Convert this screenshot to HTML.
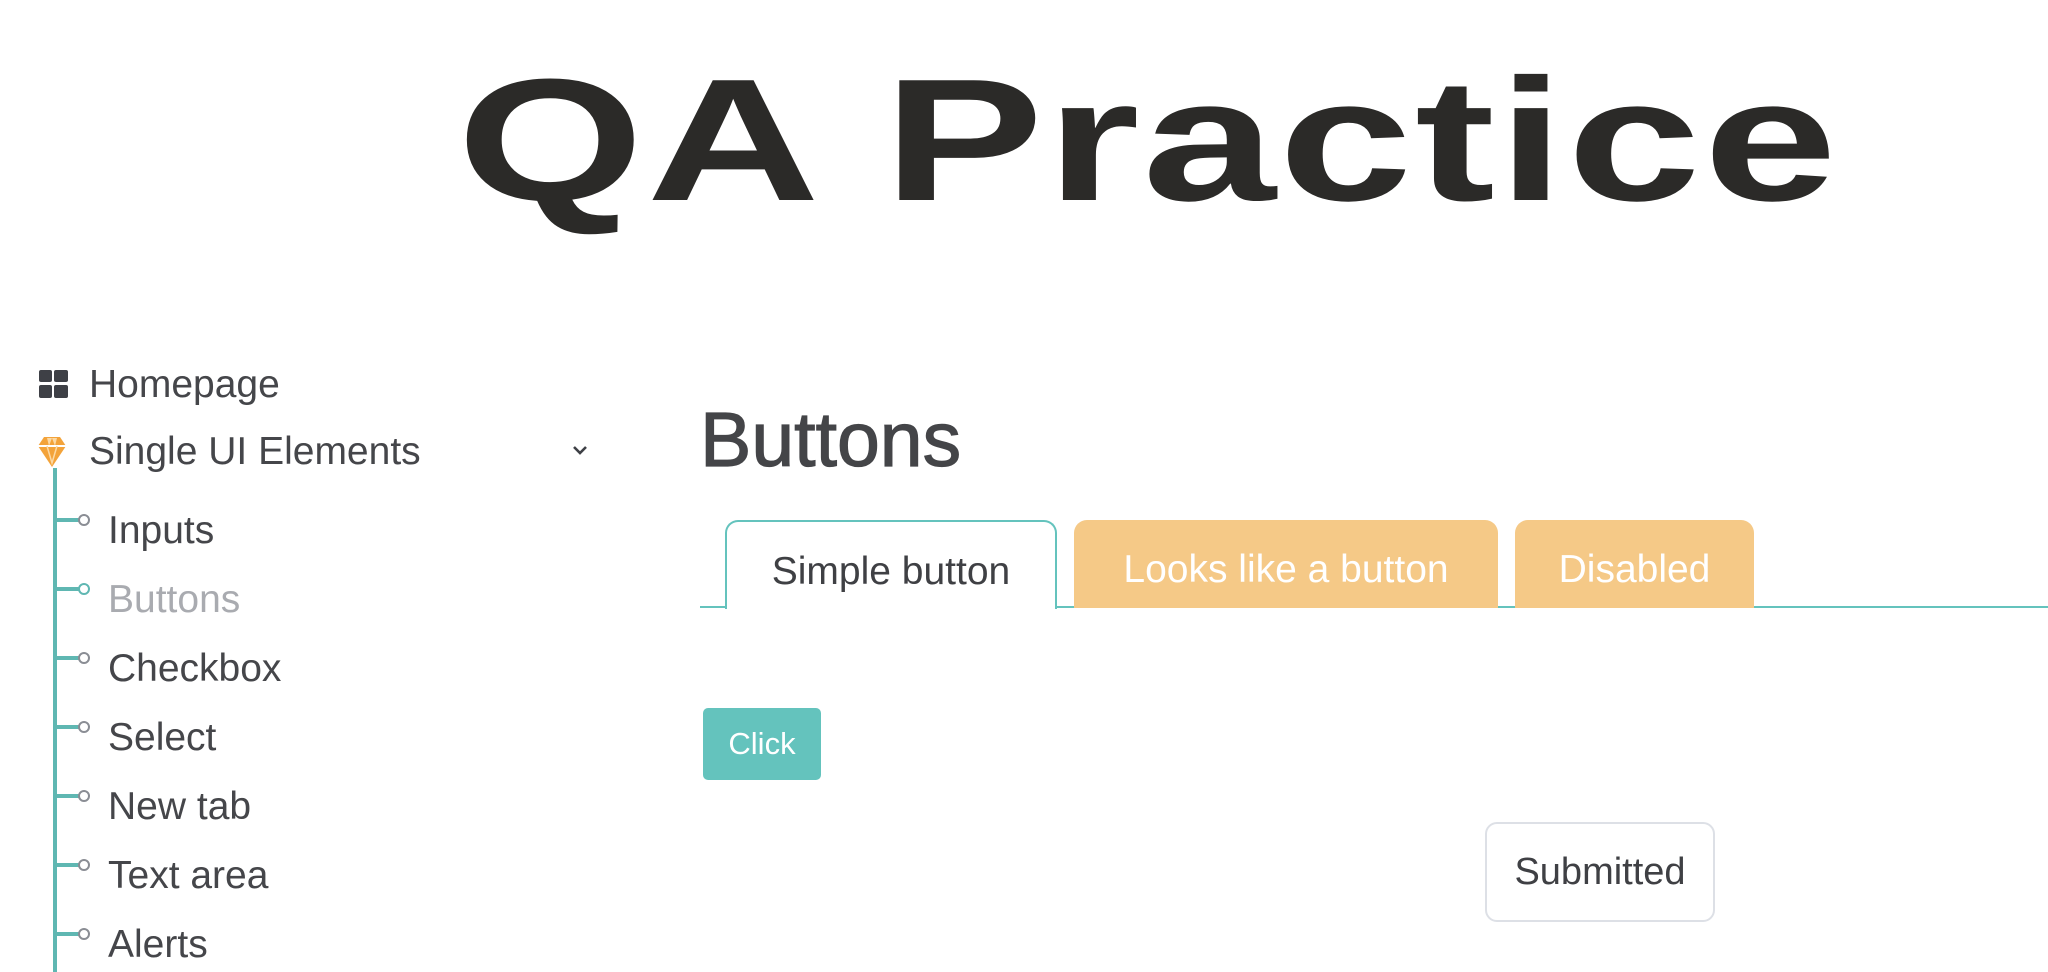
<!DOCTYPE html>
<html><head><meta charset="utf-8"><style>
*{margin:0;padding:0;box-sizing:border-box}
body{width:2048px;height:972px;background:#fff;position:relative;overflow:hidden;font-family:"Liberation Sans",Arial,sans-serif;color:#45464a}
.a{position:absolute;white-space:nowrap}
.title{left:457px;top:53px;font-size:174px;font-weight:bold;color:#2b2a28;transform-origin:0 0;transform:scaleX(1.38);line-height:174px;letter-spacing:2px}
.nav{font-size:39px;line-height:44px}
.sub{font-size:39px;line-height:44px;left:108px}
.br{position:absolute;left:55px;width:25px;height:4px;background:#5fb7b2}
.dot{position:absolute;left:78px;width:12px;height:12px;border:2px solid #8a8d94;border-radius:50%;background:#fff}
.tab{position:absolute;top:520px;height:88px;border-radius:13px 13px 0 0;font-size:39px;text-align:center;line-height:100px}
</style></head><body>
<div class="a title">QA Practice</div>

<svg class="a" style="left:39px;top:370px" width="29" height="28" viewBox="0 0 29 28"><rect x="0" y="0" width="13" height="12" rx="2" fill="#3e4046"/><rect x="15" y="0" width="14" height="12" rx="2" fill="#3e4046"/><rect x="0" y="15" width="13" height="13" rx="2" fill="#3e4046"/><rect x="15" y="15" width="14" height="13" rx="2" fill="#3e4046"/></svg>
<div class="a nav" style="left:89px;top:363px">Homepage</div>

<svg class="a" style="left:38px;top:437px" width="28" height="30" viewBox="0 0 28 30"><polygon points="6,0 22,0 28,9 14,30 0,9" fill="#f3a33a"/><polygon points="9,1 11,9 14,1 17,9 19,1" fill="#fcd9a4"/><line x1="0" y1="9" x2="28" y2="9" stroke="#fff" stroke-width="2"/><polyline points="9,9 14,26 19,9" fill="none" stroke="#fcd9a4" stroke-width="1.5"/></svg>
<div class="a nav" style="left:89px;top:430px">Single UI Elements</div>
<svg class="a" style="left:572px;top:445px" width="16" height="12" viewBox="0 0 16 12"><polyline points="2,2 8,8 14,2" fill="none" stroke="#3e4046" stroke-width="2.6"/></svg>

<div class="a" style="left:53px;top:468px;width:4px;height:504px;background:#5fb7b2"></div>
<div class="br" style="top:518px"></div><div class="dot" style="top:514px"></div>
<div class="a sub" style="top:509px">Inputs</div>
<div class="br" style="top:587px"></div><div class="dot" style="top:583px;border-color:#5fb7b2"></div>
<div class="a sub" style="top:578px;color:#a9abb0">Buttons</div>
<div class="br" style="top:656px"></div><div class="dot" style="top:652px"></div>
<div class="a sub" style="top:647px">Checkbox</div>
<div class="br" style="top:725px"></div><div class="dot" style="top:721px"></div>
<div class="a sub" style="top:716px">Select</div>
<div class="br" style="top:794px"></div><div class="dot" style="top:790px"></div>
<div class="a sub" style="top:785px">New tab</div>
<div class="br" style="top:863px"></div><div class="dot" style="top:859px"></div>
<div class="a sub" style="top:854px">Text area</div>
<div class="br" style="top:932px"></div><div class="dot" style="top:928px"></div>
<div class="a sub" style="top:923px">Alerts</div>

<div class="a" style="left:700px;top:397px;font-size:77px;line-height:86px;color:#444548;-webkit-text-stroke:1.2px #444548">Buttons</div>

<div class="a" style="left:700px;top:606px;width:1348px;height:2px;background:#64c3bd"></div>
<div class="tab" style="left:725px;width:332px;border:2px solid #64c3bd;border-bottom:none;background:#fff;color:#3f4044;height:89px">Simple button</div>
<div class="tab" style="left:1074px;width:424px;background:#f5c987;color:#fff">Looks like a button</div>
<div class="tab" style="left:1515px;width:239px;background:#f5c987;color:#fff">Disabled</div>

<div class="a" style="left:703px;top:708px;width:118px;height:72px;background:#64c3bd;border-radius:5px;color:#fff;font-size:31px;line-height:72px;text-align:center">Click</div>

<div class="a" style="left:1485px;top:822px;width:230px;height:100px;border:2px solid #dde0e6;border-radius:12px;color:#3f4044;font-size:38px;line-height:96px;text-align:center">Submitted</div>
</body></html>
